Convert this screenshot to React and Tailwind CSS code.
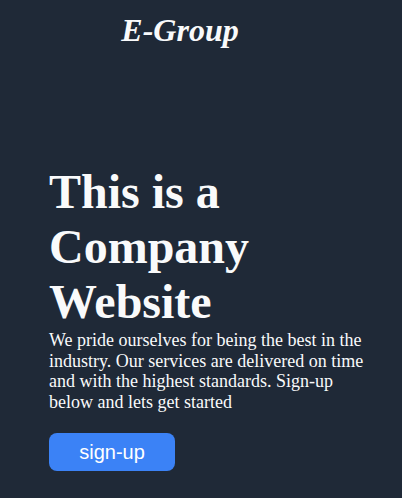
export default function App() {
  return (
    <div className="min-h-screen w-full bg-[#1f2937] text-[#f9fafb]" style={{ fontFamily: '"Liberation Serif", serif' }}>
      <header className="w-[360px] pt-[12px] text-center">
        <span className="text-[32px] font-bold italic leading-[37px]">E-Group</span>
      </header>
      <main className="pl-[49px] pt-[115px] w-[370px]">
        <h1 className="text-[48px] font-bold leading-[55px]">This is a Company Website</h1>
        <p className="mt-[1px] text-[18px] leading-[1.15]">
          We pride ourselves for being the best in the industry. Our services are delivered on time and with the highest standards. Sign-up below and lets get started
        </p>
        <button className="mt-[20px] w-[126px] h-[38px] rounded-lg bg-[#3b82f6] text-[20px] text-white" style={{ fontFamily: '"Liberation Sans", sans-serif' }}>
          sign-up
        </button>
      </main>
    </div>
  );
}
